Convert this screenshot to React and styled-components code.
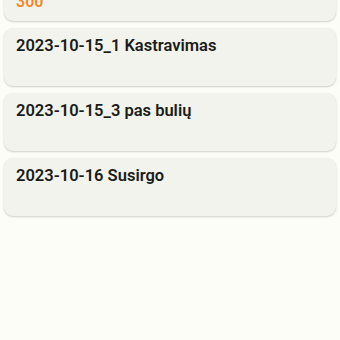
import { useEffect, useRef } from 'react';
import styled, { createGlobalStyle } from 'styled-components';

const GlobalStyle = createGlobalStyle`
  html, body {
    margin: 0;
    padding: 0;
    background: #fcfdf7;
    font-family: Roboto, "Noto Sans", sans-serif;
  }
`;

const Screen = styled.div`
  height: 340px;
  width: 340px;
  overflow: hidden;
  background: #fcfdf7;
`;

const List = styled.div`
  display: flex;
  flex-direction: column;
  gap: 7px;
  padding: 4px 4px 400px;
`;

const Card = styled.div`
  background: #f1f3ec;
  border-radius: 9px;
  box-shadow: 0 1px 2px rgba(0, 0, 0, 0.18), 0 0 1px rgba(0, 0, 0, 0.06);
  padding: 8px 12px;
  display: flex;
  flex-direction: column;
`;

const Title = styled.div`
  font-size: 16.5px;
  line-height: 20px;
  font-weight: 600;
  color: #1b1c18;
`;

const Sub = styled.div`
  font-size: 16px;
  line-height: 22px;
  height: 22px;
  font-weight: 600;
  color: ${(p) => (p.$accent ? '#f7862a' : '#44483e')};
`;

const items = [
  { title: '2023-10-14 Veršiavimasis', sub: '300' },
  { title: '2023-10-15_1 Kastravimas', sub: '' },
  { title: '2023-10-15_3 pas bulių', sub: '' },
  { title: '2023-10-16 Susirgo', sub: '' },
];

export default function App() {
  const ref = useRef(null);
  useEffect(() => {
    if (ref.current) ref.current.scrollTop = 41;
  }, []);
  return (
    <>
      <GlobalStyle />
      <Screen ref={ref}>
        <List>
          {items.map((it) => (
            <Card key={it.title}>
              <Title>{it.title}</Title>
              <Sub $accent={!!it.sub}>{it.sub}</Sub>
            </Card>
          ))}
        </List>
      </Screen>
    </>
  );
}
